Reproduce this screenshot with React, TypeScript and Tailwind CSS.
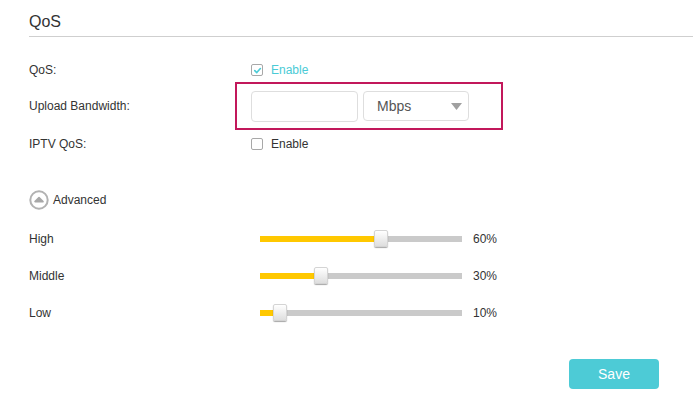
import React from "react";

const Check = ({ checked }: { checked: boolean }) => (
  <span className="w-[12px] h-[12px] border border-[#a8a8a8] rounded-[2px] bg-white flex items-center justify-center">
    {checked && (
      <svg width="9" height="9" viewBox="0 0 10 10">
        <path d="M2 5.2 L4.2 7.3 L8.2 2.8" fill="none" stroke="#4acbd6" strokeWidth="1.8" strokeLinecap="round" strokeLinejoin="round" />
      </svg>
    )}
  </span>
);

const Slider = ({ label, value }: { label: string; value: number }) => (
  <div className="flex items-center h-[24px]">
    <div className="w-[231px] text-[12px] text-[#333]">{label}</div>
    <div className="relative w-[202px] h-[6px] bg-[#cacaca]">
      <div className="h-full bg-[#ffc800]" style={{ width: `${value}%` }} />
      <div
        className="absolute top-[-6px] w-[14px] h-[17px] rounded-[2px] border border-[#d4d4d4] bg-gradient-to-b from-white to-[#dedede] shadow-[0_1px_1px_rgba(0,0,0,0.35)]"
        style={{ left: `calc(${value}% - 7px)` }}
      />
    </div>
    <div className="ml-[11px] text-[12px] text-[#333]">{value}%</div>
  </div>
);

export default function App() {
  return (
    <div
      className="w-[700px] h-[405px] bg-white pl-[29px] pr-[7px] overflow-hidden"
      style={{ fontFamily: '"Liberation Sans", Arial, sans-serif' }}
    >
      <div className="pt-[12px] pb-[4px] border-b border-[#cfcfcf]">
        <h1 className="text-[16px] leading-[20px] text-[#333]">QoS</h1>
      </div>

      <div className="mt-[22px] flex items-center h-[22px]">
        <div className="w-[222px] text-[12px] text-[#333]">QoS:</div>
        <label className="flex items-center gap-[8px]">
          <Check checked />
          <span className="text-[12px] text-[#4acbd6]">Enable</span>
        </label>
      </div>

      <div className="mt-[1px] flex items-center h-[48px]">
        <div className="w-[206px] text-[12px] text-[#333]">Upload Bandwidth:</div>
        <div className="w-[268px] h-[48px] border-2 border-[#c2185b] pl-[14px] pt-[7px] flex gap-[5px]">
          <input className="w-[107px] h-[31px] border border-[#dedede] rounded-[4px] bg-white outline-none" />
          <div className="w-[106px] h-[30px] border border-[#dedede] rounded-[4px] flex items-center justify-between pl-[13px] pr-[6px]">
            <span className="text-[14px] text-[#555]">Mbps</span>
            <svg width="11" height="7" viewBox="0 0 11 7">
              <path d="M0 0 H11 L5.5 7 Z" fill="#a0a0a0" />
            </svg>
          </div>
        </div>
      </div>

      <div className="mt-[2px] flex items-center h-[24px]">
        <div className="w-[222px] text-[12px] text-[#333]">IPTV QoS:</div>
        <label className="flex items-center gap-[8px]">
          <Check checked={false} />
          <span className="text-[12px] text-[#333]">Enable</span>
        </label>
      </div>

      <div className="mt-[34px] flex items-center h-[20px] gap-[4px]">
        <svg width="20" height="20" viewBox="0 0 20 20">
          <circle cx="10" cy="10" r="8.7" fill="none" stroke="#b2b2b2" strokeWidth="2" />
          <path d="M6 11.6 L10 7.6 L14 11.6 Z" fill="#a8a8a8" stroke="#a8a8a8" strokeWidth="1.6" strokeLinejoin="round" />
        </svg>
        <span className="text-[12px] text-[#333]">Advanced</span>
      </div>

      <div className="mt-[17px] flex flex-col gap-[13px]">
        <Slider label="High" value={60} />
        <Slider label="Middle" value={30} />
        <Slider label="Low" value={10} />
      </div>

      <div className="mt-[34px] flex justify-end pr-[34px]">
        <button className="w-[90px] h-[30px] rounded-[4px] bg-[#4dcbd6] text-white text-[14px]">Save</button>
      </div>
    </div>
  );
}
